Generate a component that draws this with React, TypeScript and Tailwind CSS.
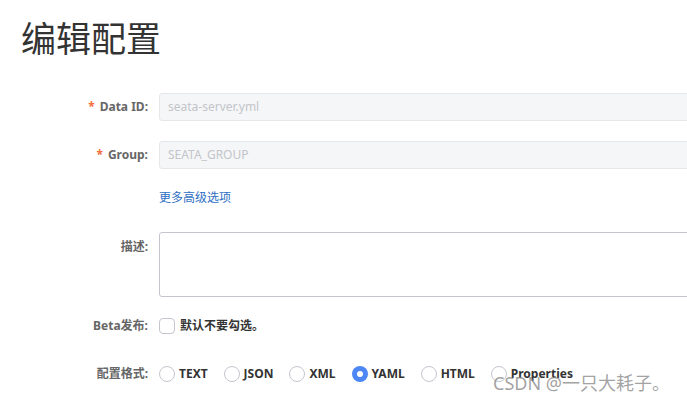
import { useState } from 'react'

const font = { fontFamily: '"Noto Sans", "Noto Sans CJK SC", sans-serif' }

const formats = ['TEXT', 'JSON', 'XML', 'YAML', 'HTML', 'Properties']

function Label({ text, required }: { text: string; required?: boolean }) {
  return (
    <div className="text-right text-[12px] font-bold text-[#666] leading-none">
      {required && <span className="text-[#f56c3c] mr-[5px]">*</span>}
      {text}
    </div>
  )
}

export default function App() {
  const [format, setFormat] = useState('YAML')

  return (
    <div className="relative w-[687px] h-[401px] overflow-hidden bg-white" style={font}>
      <h1 className="pl-[21px] pt-[17px] text-[35px] leading-[44px] font-normal text-[#333]">编辑配置</h1>

      <div className="grid grid-cols-[148px_540px] gap-x-[11px] mt-[32px] items-center">
        <Label text="Data ID:" required />
        <div className="h-[28px] rounded-[3px] border border-[#e6e7eb] bg-[#f5f6f8] px-[8px] flex items-center text-[12px] text-[#c3c5c9]">
          seata-server.yml
        </div>

        <div className="h-[20px] col-span-2" />

        <Label text="Group:" required />
        <div className="h-[28px] rounded-[3px] border border-[#e6e7eb] bg-[#f5f6f8] px-[8px] flex items-center text-[12px] text-[#c3c5c9]">
          SEATA_GROUP
        </div>

        <div />
        <a className="mt-[20px] text-[12px] text-[#2e6fc4] leading-[18px] cursor-pointer">更多高级选项</a>

        <div className="self-start pt-[34px]">
          <Label text="描述:" />
        </div>
        <div className="mt-[25px] h-[65px] rounded-[3px] border border-[#c4c6cf] bg-white" />

        <div className="mt-[20px]">
          <Label text="Beta发布:" />
        </div>
        <div className="mt-[20px] flex items-center gap-[5px]">
          <span className="w-[16px] h-[16px] rounded-[4px] border border-[#c4c6cf] bg-white" />
          <span className="text-[12px] font-bold text-[#333]">默认不要勾选。</span>
        </div>

        <div className="mt-[30px]">
          <Label text="配置格式:" />
        </div>
        <div className="mt-[30px] flex items-center">
          {formats.map((f) => (
            <label key={f} className="flex items-center mr-[16px] cursor-pointer" onClick={() => setFormat(f)}>
              <span
                className={
                  f === format
                    ? 'w-[16px] h-[16px] rounded-full bg-[#4d86f5] flex items-center justify-center'
                    : 'w-[16px] h-[16px] rounded-full border border-[#c4c6cf] bg-white'
                }
              >
                {f === format && <span className="w-[6px] h-[6px] rounded-full bg-white" />}
              </span>
              <span className="ml-[4px] text-[12px] font-bold text-[#333]">{f}</span>
            </label>
          ))}
        </div>
      </div>

      <div className="absolute left-[493px] top-[374px] text-[18px] leading-none text-[#8a8a8a]/80 whitespace-nowrap">
        CSDN @一只大耗子。
      </div>
    </div>
  )
}
